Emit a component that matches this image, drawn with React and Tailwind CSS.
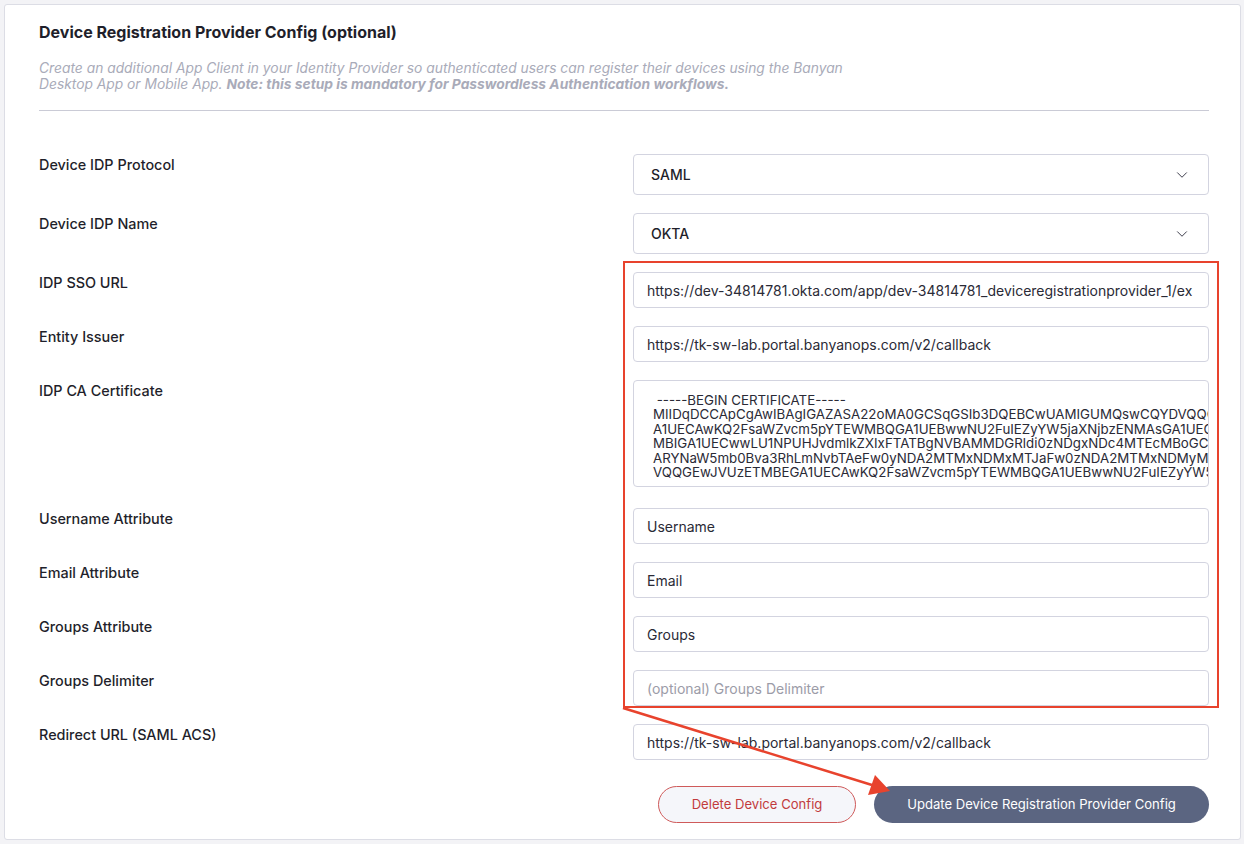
import React from 'react';
import { ChevronDown } from 'lucide-react';

const cert = [
    ' -----BEGIN CERTIFICATE-----',
    'MIIDqDCCApCgAwIBAgIGAZASA22oMA0GCSqGSIb3DQEBCwUAMIGUMQswCQYDVQQGEwJVUzETMBEGA1UE',
    'A1UECAwKQ2FsaWZvcm5pYTEWMBQGA1UEBwwNU2FuIEZyYW5jaXNjbzENMAsGA1UECgwET2t0YTEUMBIG',
    'MBIGA1UECwwLU1NPUHJvdmlkZXIxFTATBgNVBAMMDGRldi0zNDgxNDc4MTEcMBoGCSqGSIb3DQEJARYN',
    'ARYNaW5mb0Bva3RhLmNvbTAeFw0yNDA2MTMxNDMxMTJaFw0zNDA2MTMxNDMyMTJaMIGUMQswCQYDVQQG',
    'VQQGEwJVUzETMBEGA1UECAwKQ2FsaWZvcm5pYTEWMBQGA1UEBwwNU2FuIEZyYW5jaXNjbzENMAsGA1UE',
].join('\n');

function Row({ label, children, className = '' }) {
    return (
        <div className={`flex justify-between items-start ${className}`}>
            <div className="pt-px text-[14.4px] leading-5 font-medium text-[#1f1f2b]">{label}</div>
            <div className="w-[576px]">{children}</div>
        </div>
    );
}

function Select({ value }) {
    return (
        <div className="h-[41px] w-full flex items-center justify-between pl-[17px] pr-[17px] border border-[#d3d4e0] rounded-[4px] bg-white">
            <span className="text-[14px] font-medium text-[#1f1f2b]">{value}</span>
            <ChevronDown size={18} strokeWidth={1.3} className="text-[#3a3a48]" />
        </div>
    );
}

function Input({ value, placeholder }) {
    return (
        <input
            type="text"
            readOnly
            value={value || ''}
            placeholder={placeholder}
            className="h-[36px] w-full px-[13px] border border-[#d3d4e0] rounded-[4px] bg-white text-[14px] text-[#2a2a36] placeholder:text-[#9c9ca8] outline-none"
        />
    );
}

function App() {
    return (
        <div className="relative min-h-screen bg-[#f3f3f6] pt-[4px] pl-[4px] pr-[3px]" style={{ fontFamily: 'Inter, "Noto Sans", sans-serif' }}>
            <div className="h-[836px] bg-white border border-[#dcdde5] rounded-[3px] pl-[34px] pr-[31px] pt-[17px]">
                <h2 className="text-[16px] leading-5 font-bold text-[#1f1f2b]">Device Registration Provider Config (optional)</h2>
                <p className="mt-[18px] text-[13.8px] leading-4 italic text-[#a9abb9]">
                    Create an additional App Client in your Identity Provider so authenticated users can register their devices using the Banyan
                    <br />
                    Desktop App or Mobile App. <span className="font-bold">Note: this setup is mandatory for Passwordless Authentication workflows.</span>
                </p>
                <div className="mt-[18px] h-px bg-[#cacbd6]" />

                <div className="mt-[43px] flex flex-col gap-[18px]">
                    <Row label="Device IDP Protocol"><Select value="SAML" /></Row>
                    <Row label="Device IDP Name"><Select value="OKTA" /></Row>

                    <div className="relative flex flex-col gap-[18px]">
                        <Row label="IDP SSO URL">
                            <Input value="https://dev-34814781.okta.com/app/dev-34814781_deviceregistrationprovider_1/ex" />
                        </Row>
                        <Row label="Entity Issuer">
                            <Input value="https://tk-sw-lab.portal.banyanops.com/v2/callback" />
                        </Row>
                        <Row label="IDP CA Certificate" className="mb-[3px]">
                            <textarea
                                readOnly
                                wrap="off"
                                value={cert}
                                className="block h-[107px] w-full resize-none overflow-hidden whitespace-pre pl-[19px] pr-0 pt-[12px] border border-[#d3d4e0] rounded-[4px] bg-white text-[13.3px] leading-[14.4px] text-[#2a2a36] outline-none"
                            />
                        </Row>
                        <Row label="Username Attribute"><Input value="Username" /></Row>
                        <Row label="Email Attribute"><Input value="Email" /></Row>
                        <Row label="Groups Attribute"><Input value="Groups" /></Row>
                        <Row label="Groups Delimiter"><Input placeholder="(optional) Groups Delimiter" /></Row>
                        <span className="pointer-events-none absolute -top-[11px] -bottom-[2px] -right-[10px] w-[596px] border-2 border-[#e8432d]" />
                    </div>

                    <Row label="Redirect URL (SAML ACS)">
                        <Input value="https://tk-sw-lab.portal.banyanops.com/v2/callback" />
                    </Row>
                </div>

                <div className="mt-[26px] flex justify-end gap-[18px]">
                    <button className="h-[37px] w-[198px] rounded-full border border-[#cf5a5a] bg-[#f5f6fa] text-[13.1px] text-[#c23b3d]">
                        Delete Device Config
                    </button>
                    <button className="h-[37px] w-[335px] rounded-full bg-[#5b6581] text-[13.1px] text-white">
                        Update Device Registration Provider Config
                    </button>
                </div>
            </div>

            <svg className="pointer-events-none absolute inset-0" width="1244" height="844" viewBox="0 0 1244 844">
                <line x1="623" y1="708" x2="872" y2="785" stroke="#e8432d" strokeWidth="2.5" />
                <polygon points="890,791 868,795 875,775" fill="#e8432d" />
            </svg>
        </div>
    );
}

export default App;
